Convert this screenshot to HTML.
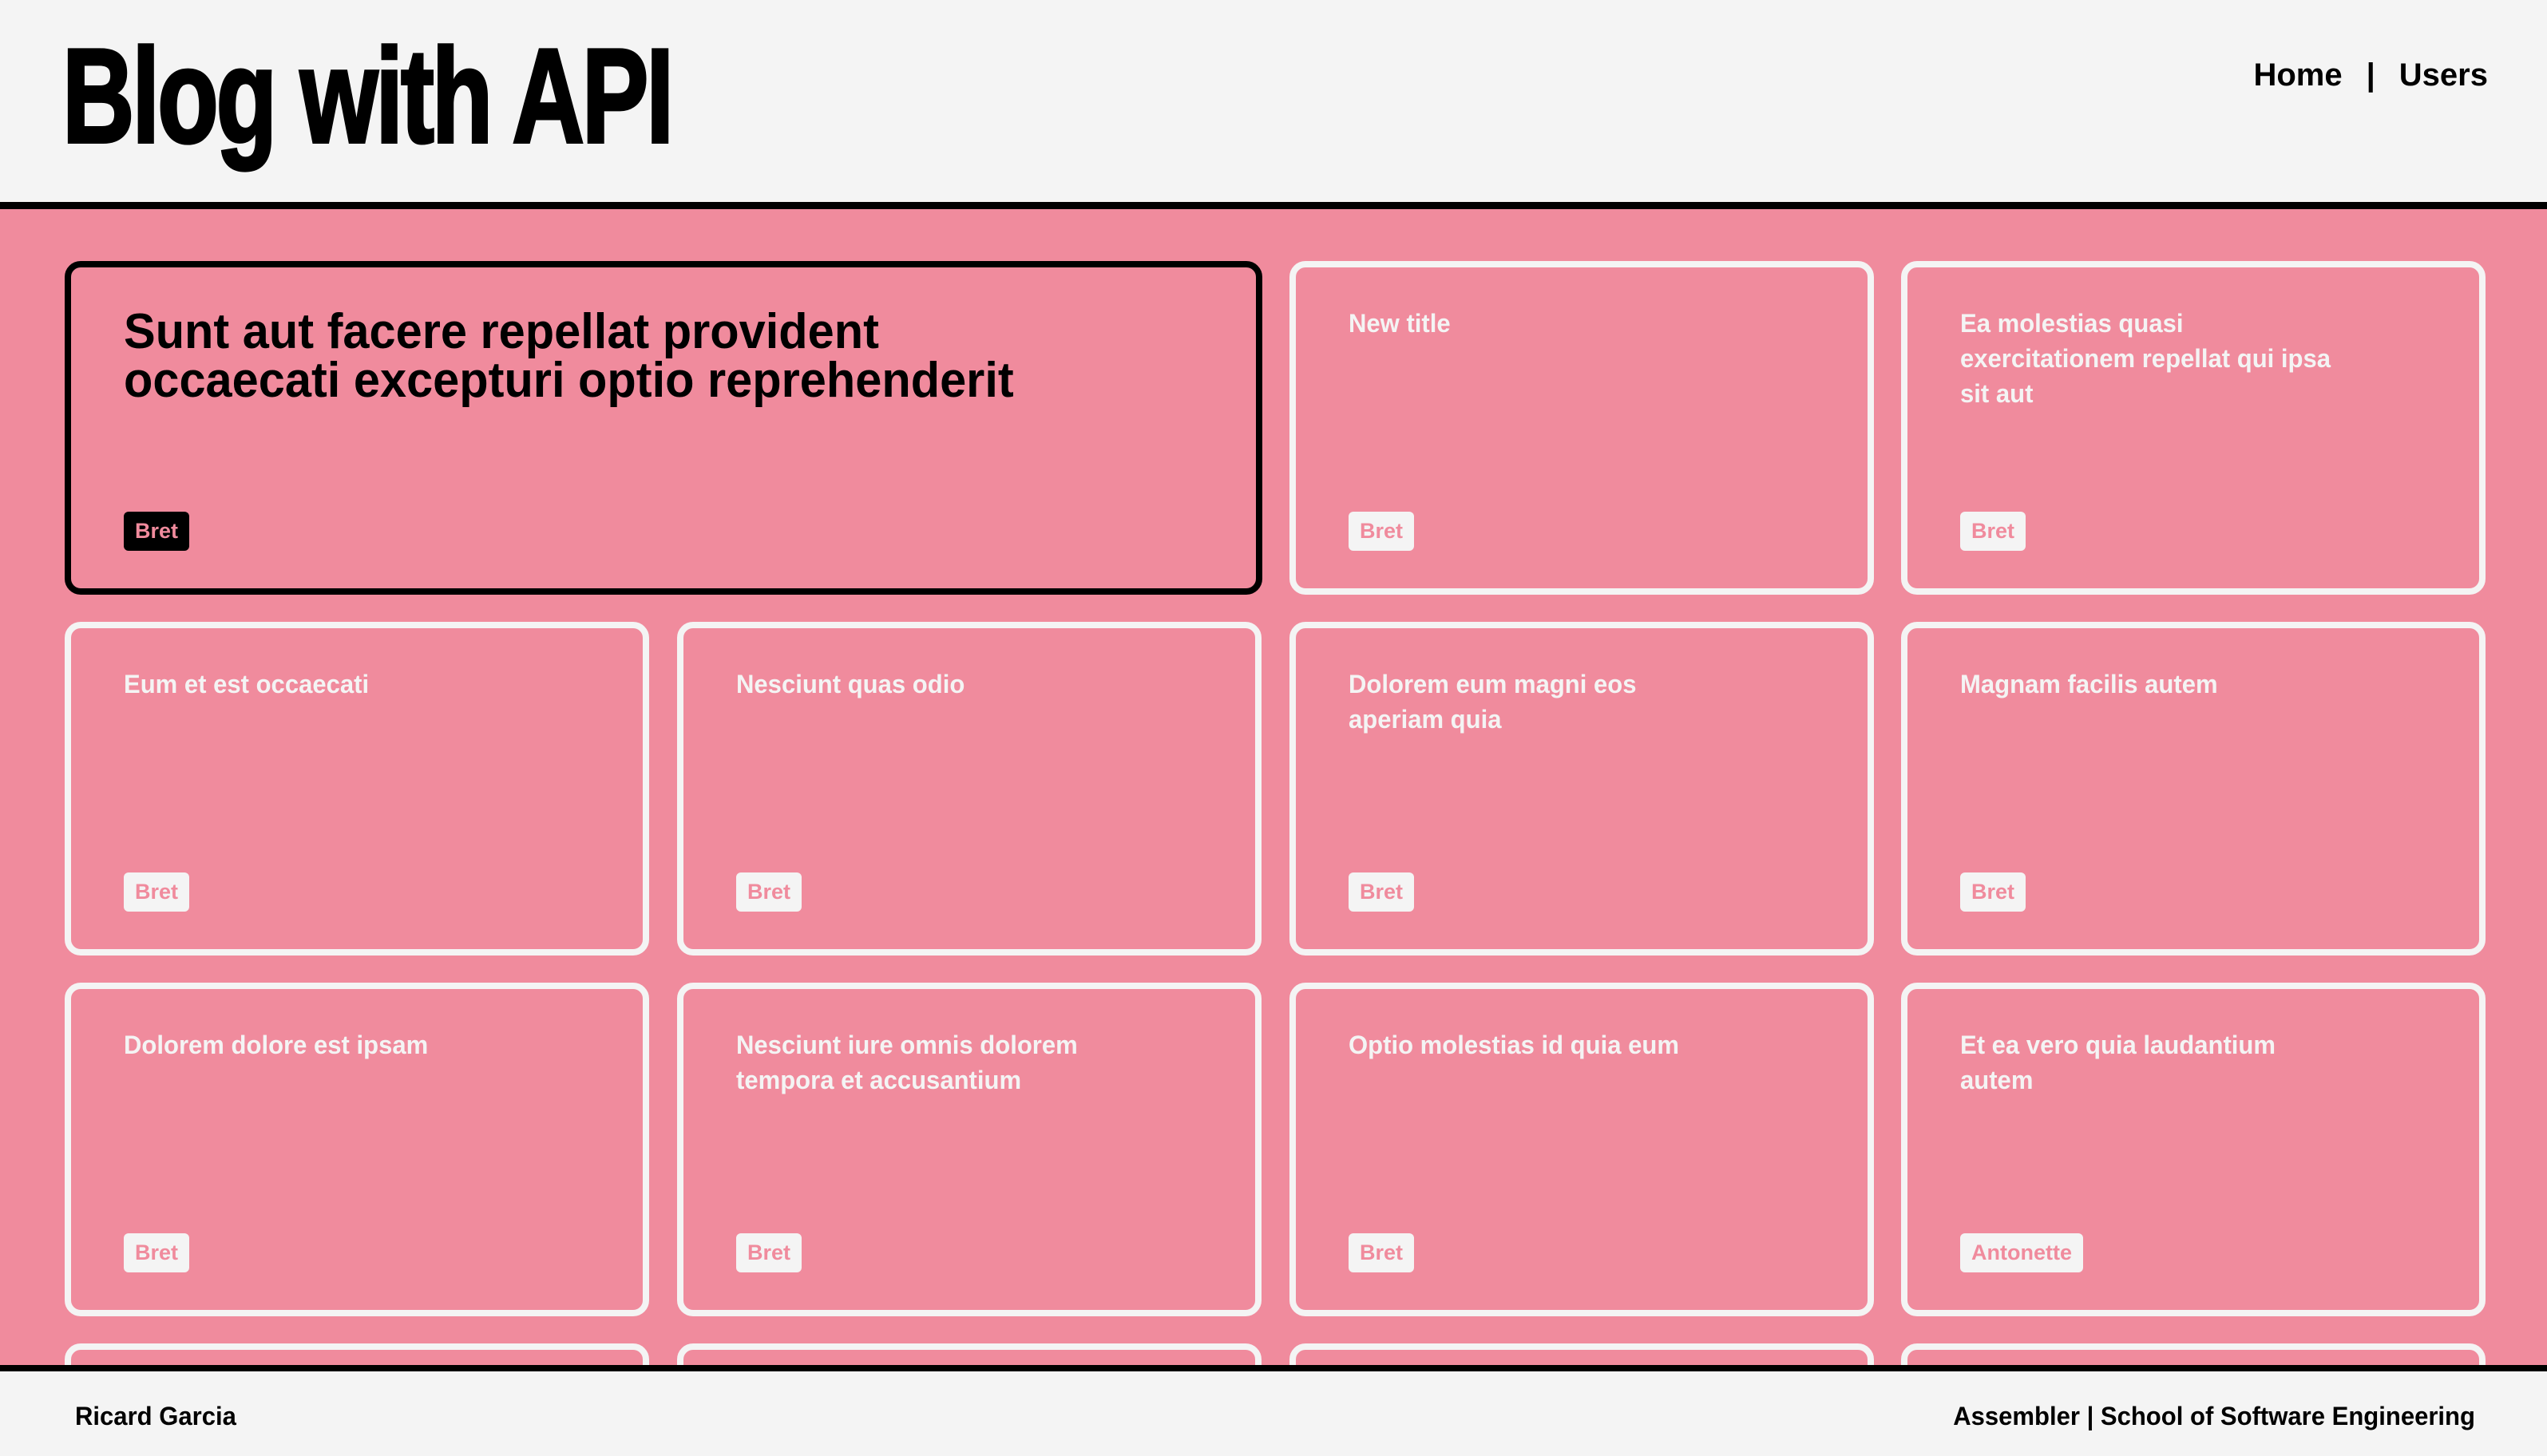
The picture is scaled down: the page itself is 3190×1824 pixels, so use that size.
<!DOCTYPE html>
<html style="width:3190px;height:1824px;overflow:hidden"><head><meta charset="utf-8"><style>
*{margin:0;padding:0;box-sizing:border-box}
body{width:3190px;height:1824px;overflow:hidden;background:#f08b9d;font-family:"Liberation Sans Narrow","Liberation Sans",sans-serif;position:relative}
#w{position:absolute;left:0;top:0;width:3190px;height:1824px;overflow:hidden}
header{position:absolute;left:0;top:0;width:3190px;height:262px;background:#f4f4f4;border-bottom:9px solid #000;z-index:2}
h1{position:absolute;left:78px;top:20px;font-family:"Liberation Sans",sans-serif;font-weight:900;font-size:168px;line-height:200px;letter-spacing:-4px;transform:scaleX(0.745);transform-origin:left top;white-space:nowrap;color:#000;-webkit-text-stroke:4px #000}
nav{position:absolute;top:72px;right:74px;font-family:"Liberation Sans",sans-serif;font-weight:bold;font-size:40px;color:#000;white-space:nowrap}
nav span{margin:0 30px}
.card{position:absolute;width:732px;height:418px;border:8px solid #f4f4f4;border-radius:20px}
.card .t{position:absolute;left:66px;top:48px;color:#f4f4f4;font-weight:bold;font-size:32px;line-height:44px;white-space:nowrap;transform:scaleX(0.97);transform-origin:left top}
.card .b{position:absolute;left:66px;bottom:47px;height:49px;padding:0 14px;background:#f4f4f4;color:#f08b9d;font-weight:bold;font-size:27px;line-height:49px;border-radius:6px}
.card.f{border-color:#000;width:1500px}
.card.f .t{color:#000;font-size:62px;line-height:61px;top:50px;transform:scaleX(0.96)}
.card.f .b{background:#000}
footer{position:absolute;left:0;top:1710px;width:3190px;height:114px;background:#f4f4f4;border-top:8px solid #000;font-weight:bold;font-size:32px;color:#000;z-index:2;font-family:"Liberation Sans",sans-serif}
footer .l{position:absolute;left:94px;top:38px;transform:scaleX(0.97);transform-origin:left top}
footer .r{position:absolute;right:90px;top:38px;transform:scaleX(0.97);transform-origin:right top}
</style></head><body><div id="w">
<header><h1>Blog with API</h1><nav>Home<span>|</span>Users</nav></header>

<div class="card f" style="left:81px;top:327px"><div class="t">Sunt aut facere repellat provident<br>occaecati excepturi optio reprehenderit</div><div class="b">Bret</div></div>
<div class="card" style="left:1615px;top:327px"><div class="t">New title</div><div class="b">Bret</div></div>
<div class="card" style="left:2381px;top:327px"><div class="t">Ea molestias quasi<br>exercitationem repellat qui ipsa<br>sit aut</div><div class="b">Bret</div></div>

<div class="card" style="left:81px;top:779px"><div class="t">Eum et est occaecati</div><div class="b">Bret</div></div>
<div class="card" style="left:848px;top:779px"><div class="t">Nesciunt quas odio</div><div class="b">Bret</div></div>
<div class="card" style="left:1615px;top:779px"><div class="t">Dolorem eum magni eos<br>aperiam quia</div><div class="b">Bret</div></div>
<div class="card" style="left:2381px;top:779px"><div class="t">Magnam facilis autem</div><div class="b">Bret</div></div>

<div class="card" style="left:81px;top:1231px"><div class="t">Dolorem dolore est ipsam</div><div class="b">Bret</div></div>
<div class="card" style="left:848px;top:1231px"><div class="t">Nesciunt iure omnis dolorem<br>tempora et accusantium</div><div class="b">Bret</div></div>
<div class="card" style="left:1615px;top:1231px"><div class="t">Optio molestias id quia eum</div><div class="b">Bret</div></div>
<div class="card" style="left:2381px;top:1231px"><div class="t">Et ea vero quia laudantium<br>autem</div><div class="b">Antonette</div></div>

<div class="card" style="left:81px;top:1683px;height:100px"></div>
<div class="card" style="left:848px;top:1683px;height:100px"></div>
<div class="card" style="left:1615px;top:1683px;height:100px"></div>
<div class="card" style="left:2381px;top:1683px;height:100px"></div>

<footer><div class="l">Ricard Garcia</div><div class="r">Assembler | School of Software Engineering</div></footer>
</div></body></html>
